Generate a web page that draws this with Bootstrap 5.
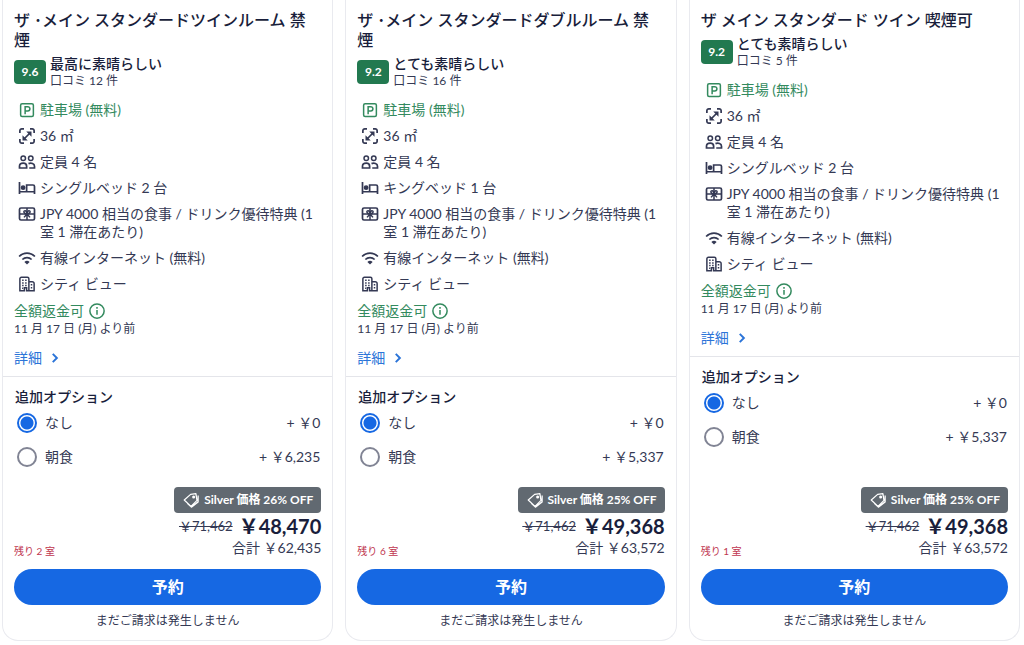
<!DOCTYPE html>
<html lang="ja">
<head>
<meta charset="utf-8">
<meta name="viewport" content="width=device-width, initial-scale=1">
<title>客室を選択</title>
<link href="https://cdn.jsdelivr.net/npm/bootstrap@5.3.0/dist/css/bootstrap.min.css" rel="stylesheet">
<style>
  body { font-family: Lato, "Noto Sans CJK JP", sans-serif; font-size: 14px; line-height: 18px; color: #343954; background: #fff; }
  .rooms { gap: 12px; padding: 0 4px 4px 2px; }
  .room { border: 1px solid #e9eaef; border-top: 0; border-radius: 0 0 16px 16px; }
  .room-info { padding: 10px 11px 8px; }
  .room-buy { padding: 10px 11px 11px; border-top: 1px solid #e4e5ea; }
  .room-title { font-size: 16px; line-height: 20px; font-weight: 500; color: #191e3b; margin-bottom: 5px; }
  .score { width: 32px; height: 24px; border-radius: 4px; background: #227950; color: #fff; font-size: 12px; font-weight: 700; }
  .score-label { font-weight: 500; color: #191e3b; }
  .fine { font-size: 12px; line-height: 16px; }
  .features { gap: 8px; margin: 12px 0 8px; padding-left: 4px; }
  .features li { display: flex; gap: 4px; }
  .ico { width: 18px; height: 18px; flex: none; fill: none; stroke: currentColor; stroke-width: 2; }
  .good { color: #338a5e; }
  .refund { line-height: 20px; }
  .info-btn { color: inherit; }
  .more { color: #2b74d8; line-height: 20px; margin-top: 11px; }
  .opt-title { font-size: 14px; line-height: 20px; font-weight: 500; color: #191e3b; padding-left: 1px; margin-bottom: 6px; }
  .opt { gap: 8px; padding: 0 1px 0 3px; line-height: 20px; margin-bottom: 14px; }
  .opt input { appearance: none; width: 20px; height: 20px; margin: 0; border: 2px solid #818494; border-radius: 50%; flex: none; }
  .opt input:checked { border-color: #1668e3; background: radial-gradient(circle, #1668e3 6px, #fff 7px); }
  .price-row { padding-top: 6px; }
  .deal { height: 26px; padding: 0 8px; gap: 4px; border-radius: 4px; background: #616971; color: #fff; font-size: 12px; font-weight: 700; }
  .price { gap: 6px; height: 26px; line-height: 26px; }
  .now { font-size: 20px; font-weight: 700; color: #191e3b; }
  .was { font-size: 13px; }
  .left-rooms { font-size: 10px; line-height: 12px; color: #c0364f; }
  .book { height: 36px; background: #1668e3; color: #fff; font-size: 16px; line-height: 20px; font-weight: 700; margin: 12px 0 8px; }
  .book:hover { background: #0d4fb5; color: #fff; }
</style>
</head>
<body>
<svg class="d-none" aria-hidden="true">
  <symbol id="i-park" viewBox="0 0 24 24"><rect x="3.500" y="3.500" width="17" height="17" rx="2"/><path d="M9.500 17.500V7.500h3.500a2.800 2.800 0 0 1 0 5.800H9.500"/></symbol>
  <symbol id="i-size" viewBox="0 0 24 24"><path d="M2.500 8V5a2.500 2.500 0 0 1 2.500-2.500h3M16 2.500h3A2.500 2.500 0 0 1 21.500 5v3M21.500 16v3a2.500 2.500 0 0 1-2.500 2.500h-3M8 21.500H5A2.500 2.500 0 0 1 2.500 19v-3M8 16l8-8" stroke-width="2.300"/><path d="M11 6h7v7zM6 11v7h7z" fill="currentColor" stroke="none"/></symbol>
  <symbol id="i-people" viewBox="0 0 24 24"><circle cx="7" cy="7" r="3"/><circle cx="17" cy="7" r="3"/><path d="M2 20v-2.500C2 15 4.500 13.500 7 13.500s4.500 1.500 4.500 4V20zM14 14.200c3.500-1.700 8 0 8 3.300V20h-7" stroke-width="2.300"/></symbol>
  <symbol id="i-bed" viewBox="0 0 24 24"><path d="M2 4v16M2 17h20M22 20V10a2 2 0 0 0-2-2h-8.500v9" stroke-width="2.300"/><circle cx="6.800" cy="11.500" r="2.200" fill="currentColor"/></symbol>
  <symbol id="i-gift" viewBox="0 0 24 24"><rect x="2" y="4" width="20" height="16" rx="2" stroke-width="2.300"/><path d="M2 12h20M12 4v16"/><path d="M12 12C7 12 7 7.500 9.500 7.500S12 10 12 12s0-4.500 2.500-4.500S17 12 12 12l-4 4.500M12 12l4 4.500"/></symbol>
  <symbol id="i-wifi" viewBox="0 0 24 24"><path d="M1.500 10c6-6 15-6 21 0M5.800 14c3.500-3.500 8.900-3.500 12.400 0" stroke-width="2.300"/><path d="M8.500 17.300a5 5 0 0 1 7 0L12 20.800z" fill="currentColor" stroke="none"/></symbol>
  <symbol id="i-city" viewBox="0 0 24 24"><path d="M9.500 21H2.500V5a2 2 0 0 1 2-2h8a2 2 0 0 1 2 2v16h-3v-4h-3v4M14.500 9H19a2.500 2.500 0 0 1 2.500 2.500V21h-7"/><path d="M5.500 7h2M9.500 7h2M5.500 10.500h2M9.500 10.500h2M5.500 14h2M9.500 14h2M5.500 17.500h1.500M17 13h2M17 17h2"/></symbol>
  <symbol id="i-info" viewBox="0 0 24 24"><circle cx="12" cy="12" r="9.500"/><path d="M12 10.500V17M12 6.800v2.200"/></symbol>
  <symbol id="i-next" viewBox="0 0 24 24"><path d="M9 6.500l5.500 5.500L9 17.500" stroke-width="2.600"/></symbol>
  <symbol id="i-tag" viewBox="0 0 24 24"><path d="M11.500 4.500l7-1 1.500 9-8 8L3 12zM7 16.500L12.500 21.500 21.500 14.500V6" stroke-width="1.700" stroke-linejoin="round"/><circle cx="15.500" cy="8" r="1" fill="currentColor"/></symbol>
</svg>

<main class="rooms d-flex">
  <article class="room d-flex flex-column flex-fill w-100">
    <div class="room-info">
      <h2 class="room-title">ザ ･メイン スタンダードツインルーム 禁煙</h2>
      <div class="d-flex align-items-center gap-1">
        <span class="score d-flex align-items-center justify-content-center">9.6</span>
        <div><div class="score-label">最高に素晴らしい</div><div class="fine">口コミ 12 件</div></div>
      </div>
      <ul class="features list-unstyled d-flex flex-column">
        <li class="good"><svg class="ico"><use href="#i-park"/></svg><span>駐車場 (無料)</span></li>
        <li><svg class="ico"><use href="#i-size"/></svg><span>36 ㎡</span></li>
        <li><svg class="ico"><use href="#i-people"/></svg><span>定員 4 名</span></li>
        <li><svg class="ico"><use href="#i-bed"/></svg><span>シングルベッド 2 台</span></li>
        <li><svg class="ico"><use href="#i-gift"/></svg><span>JPY 4000 相当の食事 / ドリンク優待特典 (1 室 1 滞在あたり)</span></li>
        <li><svg class="ico"><use href="#i-wifi"/></svg><span>有線インターネット (無料)</span></li>
        <li><svg class="ico"><use href="#i-city"/></svg><span>シティ ビュー</span></li>
      </ul>
      <div class="refund good d-flex align-items-center gap-1">全額返金可<button type="button" class="info-btn border-0 bg-transparent p-0 d-flex" aria-label="返金条件"><svg class="ico"><use href="#i-info"/></svg></button></div>
      <div class="fine">11 月 17 日 (月) より前</div>
      <a href="#" class="more d-inline-flex align-items-center gap-1 text-decoration-none">詳細<svg class="ico"><use href="#i-next"/></svg></a>
    </div>
    <div class="room-buy d-flex flex-column flex-grow-1">
      <h3 class="opt-title">追加オプション</h3>
      <label class="opt d-flex align-items-center"><input type="radio" name="meal1" checked><span>なし</span><span class="ms-auto">+ ￥0</span></label>
      <label class="opt d-flex align-items-center"><input type="radio" name="meal1"><span>朝食</span><span class="ms-auto">+ ￥6,235</span></label>
      <div class="price-row mt-auto d-flex align-items-end justify-content-between">
        <span class="left-rooms">残り 2 室</span>
        <div class="d-flex flex-column align-items-end">
          <span class="deal d-flex align-items-center"><svg class="ico"><use href="#i-tag"/></svg>Silver 価格 26% OFF</span>
          <div class="price d-flex align-items-center"><del class="was">￥71,462</del><span class="now">￥48,470</span></div>
          <div>合計 ￥62,435</div>
        </div>
      </div>
      <button type="button" class="book btn rounded-pill border-0 w-100 py-0">予約</button>
      <div class="fine text-center">まだご請求は発生しません</div>
    </div>
  </article>

  <article class="room d-flex flex-column flex-fill w-100">
    <div class="room-info">
      <h2 class="room-title">ザ ･メイン スタンダードダブルルーム 禁煙</h2>
      <div class="d-flex align-items-center gap-1">
        <span class="score d-flex align-items-center justify-content-center">9.2</span>
        <div><div class="score-label">とても素晴らしい</div><div class="fine">口コミ 16 件</div></div>
      </div>
      <ul class="features list-unstyled d-flex flex-column">
        <li class="good"><svg class="ico"><use href="#i-park"/></svg><span>駐車場 (無料)</span></li>
        <li><svg class="ico"><use href="#i-size"/></svg><span>36 ㎡</span></li>
        <li><svg class="ico"><use href="#i-people"/></svg><span>定員 4 名</span></li>
        <li><svg class="ico"><use href="#i-bed"/></svg><span>キングベッド 1 台</span></li>
        <li><svg class="ico"><use href="#i-gift"/></svg><span>JPY 4000 相当の食事 / ドリンク優待特典 (1 室 1 滞在あたり)</span></li>
        <li><svg class="ico"><use href="#i-wifi"/></svg><span>有線インターネット (無料)</span></li>
        <li><svg class="ico"><use href="#i-city"/></svg><span>シティ ビュー</span></li>
      </ul>
      <div class="refund good d-flex align-items-center gap-1">全額返金可<button type="button" class="info-btn border-0 bg-transparent p-0 d-flex" aria-label="返金条件"><svg class="ico"><use href="#i-info"/></svg></button></div>
      <div class="fine">11 月 17 日 (月) より前</div>
      <a href="#" class="more d-inline-flex align-items-center gap-1 text-decoration-none">詳細<svg class="ico"><use href="#i-next"/></svg></a>
    </div>
    <div class="room-buy d-flex flex-column flex-grow-1">
      <h3 class="opt-title">追加オプション</h3>
      <label class="opt d-flex align-items-center"><input type="radio" name="meal2" checked><span>なし</span><span class="ms-auto">+ ￥0</span></label>
      <label class="opt d-flex align-items-center"><input type="radio" name="meal2"><span>朝食</span><span class="ms-auto">+ ￥5,337</span></label>
      <div class="price-row mt-auto d-flex align-items-end justify-content-between">
        <span class="left-rooms">残り 6 室</span>
        <div class="d-flex flex-column align-items-end">
          <span class="deal d-flex align-items-center"><svg class="ico"><use href="#i-tag"/></svg>Silver 価格 25% OFF</span>
          <div class="price d-flex align-items-center"><del class="was">￥71,462</del><span class="now">￥49,368</span></div>
          <div>合計 ￥63,572</div>
        </div>
      </div>
      <button type="button" class="book btn rounded-pill border-0 w-100 py-0">予約</button>
      <div class="fine text-center">まだご請求は発生しません</div>
    </div>
  </article>

  <article class="room d-flex flex-column flex-fill w-100">
    <div class="room-info">
      <h2 class="room-title">ザ メイン スタンダード ツイン 喫煙可</h2>
      <div class="d-flex align-items-center gap-1">
        <span class="score d-flex align-items-center justify-content-center">9.2</span>
        <div><div class="score-label">とても素晴らしい</div><div class="fine">口コミ 5 件</div></div>
      </div>
      <ul class="features list-unstyled d-flex flex-column">
        <li class="good"><svg class="ico"><use href="#i-park"/></svg><span>駐車場 (無料)</span></li>
        <li><svg class="ico"><use href="#i-size"/></svg><span>36 ㎡</span></li>
        <li><svg class="ico"><use href="#i-people"/></svg><span>定員 4 名</span></li>
        <li><svg class="ico"><use href="#i-bed"/></svg><span>シングルベッド 2 台</span></li>
        <li><svg class="ico"><use href="#i-gift"/></svg><span>JPY 4000 相当の食事 / ドリンク優待特典 (1 室 1 滞在あたり)</span></li>
        <li><svg class="ico"><use href="#i-wifi"/></svg><span>有線インターネット (無料)</span></li>
        <li><svg class="ico"><use href="#i-city"/></svg><span>シティ ビュー</span></li>
      </ul>
      <div class="refund good d-flex align-items-center gap-1">全額返金可<button type="button" class="info-btn border-0 bg-transparent p-0 d-flex" aria-label="返金条件"><svg class="ico"><use href="#i-info"/></svg></button></div>
      <div class="fine">11 月 17 日 (月) より前</div>
      <a href="#" class="more d-inline-flex align-items-center gap-1 text-decoration-none">詳細<svg class="ico"><use href="#i-next"/></svg></a>
    </div>
    <div class="room-buy d-flex flex-column flex-grow-1">
      <h3 class="opt-title">追加オプション</h3>
      <label class="opt d-flex align-items-center"><input type="radio" name="meal3" checked><span>なし</span><span class="ms-auto">+ ￥0</span></label>
      <label class="opt d-flex align-items-center"><input type="radio" name="meal3"><span>朝食</span><span class="ms-auto">+ ￥5,337</span></label>
      <div class="price-row mt-auto d-flex align-items-end justify-content-between">
        <span class="left-rooms">残り 1 室</span>
        <div class="d-flex flex-column align-items-end">
          <span class="deal d-flex align-items-center"><svg class="ico"><use href="#i-tag"/></svg>Silver 価格 25% OFF</span>
          <div class="price d-flex align-items-center"><del class="was">￥71,462</del><span class="now">￥49,368</span></div>
          <div>合計 ￥63,572</div>
        </div>
      </div>
      <button type="button" class="book btn rounded-pill border-0 w-100 py-0">予約</button>
      <div class="fine text-center">まだご請求は発生しません</div>
    </div>
  </article>
</main>
<script src="https://cdn.jsdelivr.net/npm/bootstrap@5.3.0/dist/js/bootstrap.bundle.min.js"></script>
</body>
</html>
